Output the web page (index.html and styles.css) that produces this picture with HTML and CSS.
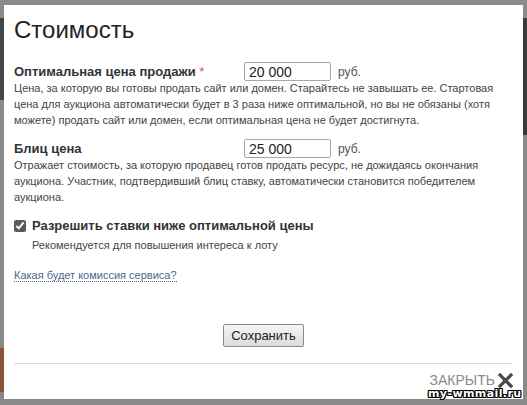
FILE: index.html
```html
<!DOCTYPE html>
<html lang="ru">

<head>
  <meta charset="UTF-8" />
  <title>Стоимость</title>
  <link rel="stylesheet" href="styles.css">
</head>

<body>
  <div class="modal">
    <h1>Стоимость</h1>

    <div class="field">
      <div class="field-row">
        <label class="field-label" for="optimal">Оптимальная цена продажи <span class="req">*</span></label>
        <input class="price" type="text" id="optimal" value="20 000" />
        <span class="unit">руб.</span>
      </div>
      <p class="hint">Цена, за которую вы готовы продать сайт или домен. Старайтесь не завышать ее. Стартовая
        цена для аукциона автоматически будет в 3 раза ниже оптимальной, но вы не обязаны (хотя
        можете) продать сайт или домен, если оптимальная цена не будет достигнута.</p>
    </div>

    <div class="field">
      <div class="field-row">
        <label class="field-label" for="blitz">Блиц цена</label>
        <input class="price" type="text" id="blitz" value="25 000" />
        <span class="unit">руб.</span>
      </div>
      <p class="hint">Отражает стоимость, за которую продавец готов продать ресурс, не дожидаясь окончания
        аукциона. Участник, подтвердивший блиц ставку, автоматически становится победителем
        аукциона.</p>
    </div>

    <div class="check">
      <label class="check-label"><input type="checkbox" checked /> Разрешить ставки ниже оптимальной цены</label>
      <p class="hint check-hint">Рекомендуется для повышения интереса к лоту</p>
    </div>

    <a class="fee-link" href="#">Какая будет комиссия сервиса?</a>

    <div class="actions">
      <button type="button">Сохранить</button>
    </div>

    <div class="footer">
      <a class="close" href="#">ЗАКРЫТЬ
        <svg width="15" height="15" viewBox="0 0 15 15">
          <path d="M2 2 L13 13 M13 2 L2 13" stroke="#4a4a4a" stroke-width="3.2" stroke-linecap="square" />
        </svg>
      </a>
    </div>
  </div>

  <div class="watermark">my-wmmail.ru</div>
</body>

</html>
```

FILE: styles.css
```css
* {
  box-sizing: border-box;
  margin: 0;
  padding: 0;
}

body {
  width: 527px;
  height: 405px;
  overflow: hidden;
  font-family: "Liberation Sans", Arial, sans-serif;
  color: #222;
  background:
    linear-gradient(#454545, #454545) 0 18px / 4px 82px no-repeat,
    linear-gradient(#8a5638, #8a5638) 0 348px / 4px 44px no-repeat,
    linear-gradient(#3a3a3a, #3a3a3a) 523px 18px / 4px 117px no-repeat,
    #8a8a8a;
  padding: 5px 4px 6px 4px;
}

/* Modal */
.modal {
  width: 519px;
  height: 394px;
  background: #ffffff;
  padding: 11px 10px 0 10px;
  display: flex;
  flex-direction: column;
}

h1 {
  font-size: 24px;
  font-weight: normal;
  line-height: 28px;
  color: #222;
  margin-bottom: 18px;
}

.field {
  margin-bottom: 9px;
}

.field + .field {
  margin-top: 2px;
}

.field-row {
  display: flex;
  align-items: center;
  height: 19px;
}

.field-label {
  width: 230px;
  font-size: 13px;
  font-weight: bold;
  color: #333;
}

.req {
  color: #d9534f;
  font-weight: normal;
}

.price {
  width: 87px;
  height: 19px;
  border: 1px solid #a8a8a8;
  border-radius: 2px;
  padding: 0 4px;
  font-family: "Liberation Sans", Arial, sans-serif;
  font-size: 14px;
  color: #222;
}

.unit {
  margin-left: 7px;
  font-size: 12px;
  color: #555;
}

.hint {
  font-size: 11px;
  line-height: 16px;
  color: #444;
  margin-top: -1px;
}

/* Checkbox */
.check {
  margin-top: 4px;
}

.check-label {
  display: flex;
  align-items: center;
  gap: 6px;
  font-size: 13px;
  font-weight: bold;
  color: #333;
}

.check-label input {
  width: 12px;
  height: 12px;
  accent-color: #5a5a5a;
}

.check-hint {
  margin-left: 18px;
  margin-top: 4px;
}

.fee-link {
  align-self: flex-start;
  margin-top: 16px;
  font-size: 11px;
  color: #4a6888;
  text-decoration: none;
  border-bottom: 1px dotted #4a6888;
}

.actions {
  display: flex;
  justify-content: center;
  margin-top: 42px;
}

button {
  font-family: "Liberation Sans", Arial, sans-serif;
  font-size: 13px;
  color: #222;
  padding: 3px 7px;
  border: 1px solid #8a8a8a;
  border-radius: 2px;
  background: linear-gradient(#f6f6f6, #dcdcdc);
}

/* Footer */
.footer {
  margin-top: 16px;
  border-top: 1px solid #dcdcdc;
  display: flex;
  justify-content: flex-end;
  padding-top: 8px;
}

.close {
  display: flex;
  align-items: center;
  gap: 3px;
  font-size: 14px;
  color: #8a8a8a;
  text-decoration: none;
}

.watermark {
  position: absolute;
  left: 428px;
  top: 387px;
  white-space: nowrap;
  font-family: "DejaVu Sans", sans-serif;
  font-weight: bold;
  font-size: 11px;
  letter-spacing: 0.4px;
  color: #ffffff;
  text-shadow: 1px 0 #000, -1px 0 #000, 0 1px #000, 0 -1px #000, 1px 1px #000, -1px -1px #000, 1px -1px #000, -1px 1px #000;
}
```
